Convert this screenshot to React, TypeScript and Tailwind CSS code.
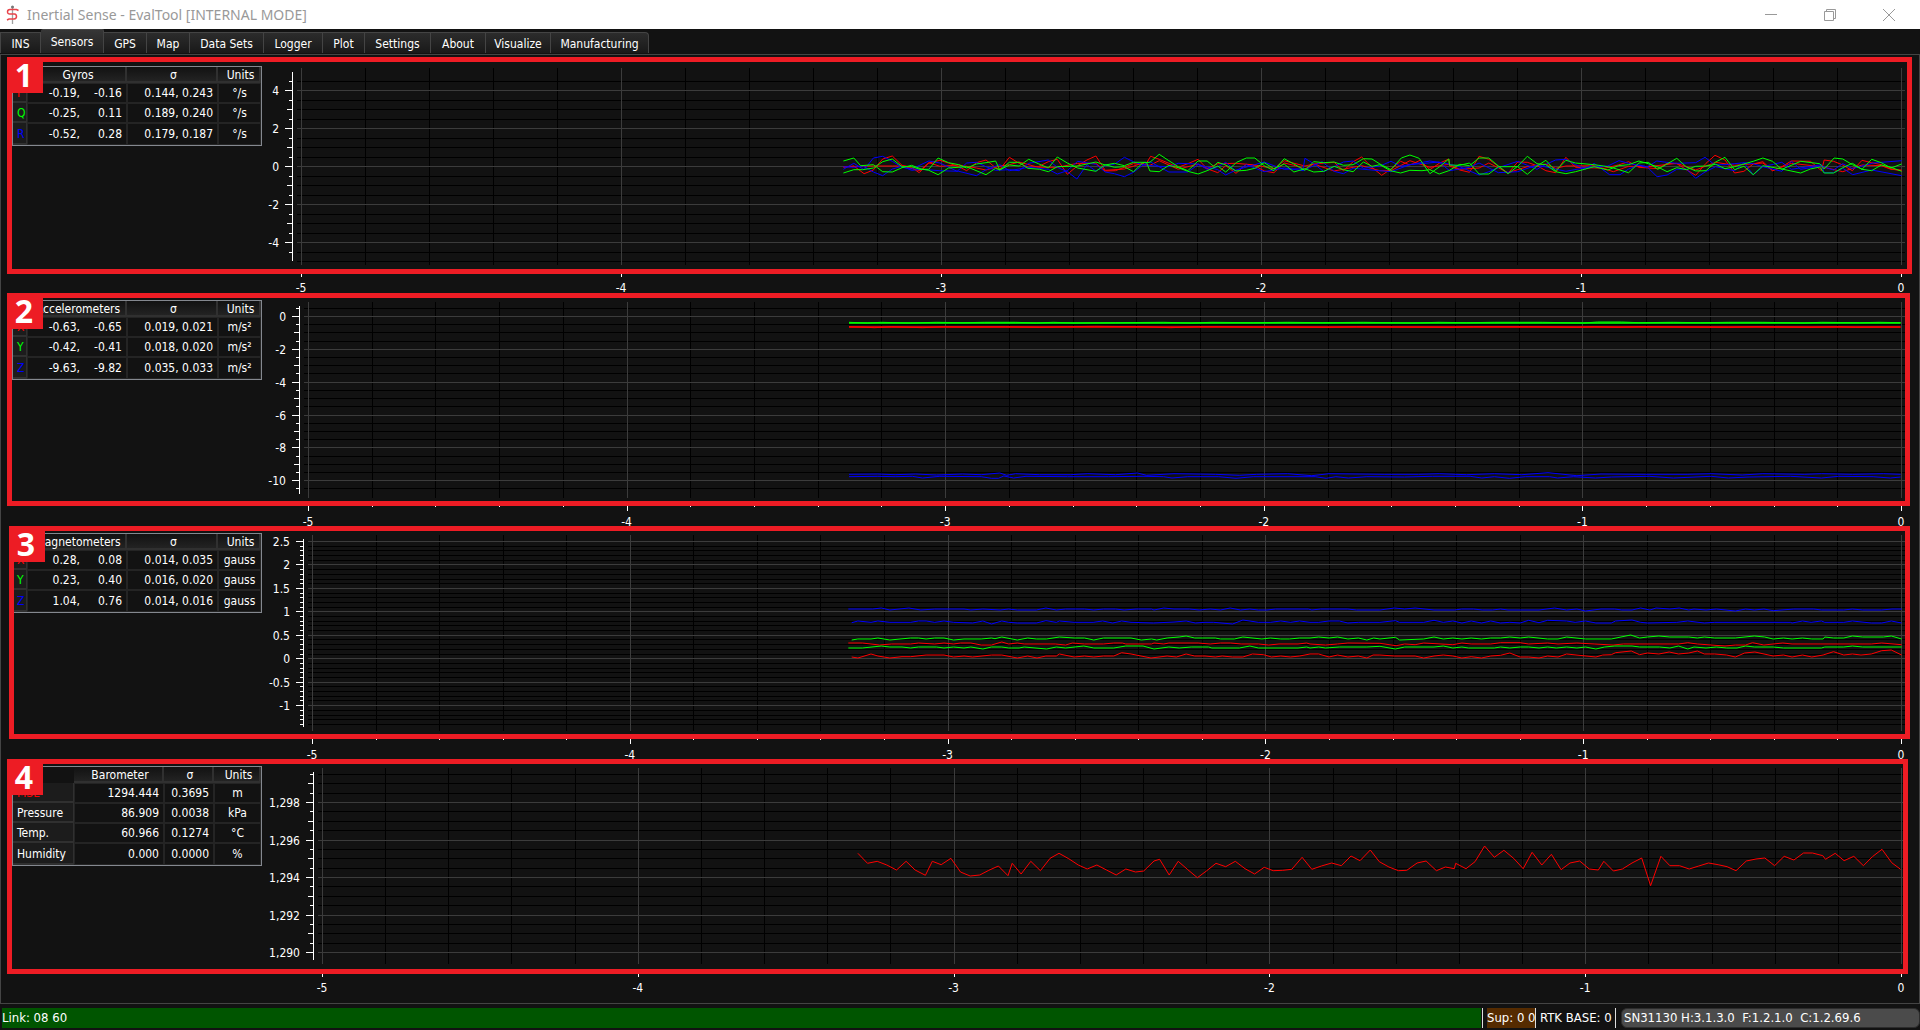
import React from 'react';

type Trace = { color: string; points: string; width?: number };

type Chart = {
  id: number;
  title: string;
  /** width of the y axis column and of the plot canvas */
  axisWidth: number;
  plotWidth: number;
  plotHeight: number;
  /** y axis line, first and last pixel */
  axisFrom: number;
  axisTo: number;
  /** value at the top of the scale: pixel of `origin`, pixels per unit */
  origin: number;
  originY: number;
  unit: number;
  step: number;
  from: number;
  to: number;
  majorEvery: number;
  mediumEvery: number;
  labels: string[];
  /** trace coordinates: divisor in x, and zero position */
  sx: number;
  left: number;
  top: number;
  traces: Trace[];
  rows: { name: string; color: string; a: string; b?: string; sigma: string; unit: string }[];
};

const RED = '#ff0000';
const GREEN = '#00ff00';
const BLUE = '#0000ff';

const gyroTraces: Trace[] = [
  { color: RED, points: '10 112 40 108 70 131 97 120 124 87 152 78 180 106 208 112 230 128 258 99 290 91 315 99 345 110 368 122 396 98 424 90 452 113 464 118 492 82 520 100 548 112 576 110 605 95 631 88 660 133 690 107 717 90 743 78 770 121 826 117 880 99 887 105 902 79 927 88 955 100 982 112 1010 101 1040 88 1066 116 1097 128 1120 107 1150 130 1180 103 1205 107 1232 123 1260 128 1290 99 1318 106 1350 117 1376 102 1435 97 1462 122 1490 95 1515 81 1545 112 1573 136 1600 117 1628 94 1655 105 1685 91 1713 119 1740 100 1768 87 1770 108 1800 120 1828 127 1856 79 1884 88 1912 109 1940 130 1968 96 1996 97 2024 107 2050 122 2078 128 2108 82 2136 112 2220 115 2260 105 2290 95 2320 112 2375 116 2402 100 2430 101 2458 119 2485 136 2515 100 2541 76 2570 90 2598 129 2625 124 2652 102 2680 95 2708 122 2735 110 2763 93 2818 94 2850 122 2858 90 2885 94 2912 105 2940 122 2968 91 2996 98 3024 104 3052 117 3083 122' },
  { color: RED, points: '10 110 97 108 152 108 180 108 232 122 258 98 290 109 345 105 396 114 424 120 464 108 492 104 520 96 576 112 631 112 690 100 743 100 770 123 800 122 852 101 900 106 927 92 982 118 1040 102 1066 116 1097 101 1150 100 1205 105 1260 116 1290 92 1350 108 1376 102 1435 123 1515 107 1568 122 1600 122 1655 92 1713 112 1768 103 1800 118 1856 114 1884 99 1940 128 1996 110 2050 102 2078 115 2108 108 2190 107 2246 125 2290 109 2347 110 2430 100 2485 120 2543 97 2598 106 2680 99 2708 122 2763 100 2850 110 2912 125 2968 105 3024 107 3052 118 3083 120' },
  { color: BLUE, points: '10 118 40 100 70 119 97 84 124 79 152 94 180 112 208 117 258 93 290 99 340 124 368 99 396 97 424 110 452 121 492 119 520 122 548 100 605 90 631 112 660 125 688 147 717 104 743 123 770 107 797 103 826 82 852 95 880 105 900 95 955 126 1010 126 1040 104 1097 119 1120 135 1150 120 1232 96 1260 107 1290 118 1345 116 1350 85 1376 101 1405 125 1462 96 1490 93 1520 115 1568 108 1600 94 1628 109 1713 93 1768 102 1800 110 1856 135 1884 125 1912 113 1968 94 2024 118 2050 103 2078 90 2108 88 2136 104 2165 117 2190 100 2235 134 2265 134 2290 117 2320 105 2345 110 2372 93 2400 97 2430 100 2485 98 2512 82 2540 104 2570 104 2625 98 2652 101 2680 110 2735 124 2763 94 2790 118 2850 108 2885 120 2912 101 2940 116 3000 99 3083 92' },
  { color: BLUE, points: '10 110 40 112 66 108 97 126 124 137 152 117 180 109 208 121 236 118 290 122 345 124 396 137 424 119 464 104 492 122 548 112 605 118 631 132 660 122 690 94 743 103 770 126 797 131 826 140 852 127 880 105 927 109 955 110 982 100 1040 102 1066 118 1097 110 1120 97 1150 123 1180 104 1232 125 1290 114 1345 122 1400 95 1435 124 1462 131 1490 115 1545 120 1600 125 1655 104 1740 96 1770 122 1828 112 1856 99 1912 128 1968 125 2024 105 2108 124 2165 113 2230 108 2262 92 2290 100 2345 112 2373 140 2402 135 2430 118 2458 117 2485 145 2512 126 2543 110 2598 122 2625 98 2652 134 2680 110 2735 97 2763 118 2850 104 2858 128 2885 128 2912 115 2941 134 2996 120 3083 137' },
  { color: GREEN, points: '10 93 40 84 60 107 97 104 124 125 152 126 180 113 208 106 236 117 258 121 285 134 315 114 368 110 424 134 452 115 464 120 492 97 520 97 545 115 580 118 605 125 631 110 690 108 743 96 770 105 797 100 826 107 852 97 890 97 900 123 927 125 955 106 982 113 1010 124 1040 132 1066 122 1097 108 1120 126 1152 97 1180 84 1205 84 1232 107 1260 122 1290 86 1318 102 1350 121 1376 95 1405 98 1435 96 1462 106 1490 104 1520 86 1545 87 1568 102 1600 119 1630 84 1655 75 1682 85 1713 131 1740 111 1768 87 1770 105 1800 106 1828 99 1856 132 1884 132 1912 110 1968 110 1996 133 2024 108 2050 91 2078 123 2108 91 2136 99 2190 104 2218 108 2246 114 2290 128 2320 99 2347 97 2375 118 2430 85 2458 111 2485 123 2515 122 2543 96 2570 82 2598 119 2625 109 2652 134 2680 107 2735 117 2790 129 2818 117 2845 111 2858 129 2885 129 2912 113 2940 100 2968 118 2996 122 3024 105 3052 112 3083 124' },
  { color: GREEN, points: '10 129 40 119 66 119 97 114 124 95 152 87 180 110 208 110 232 118 258 118 285 84 315 98 345 104 368 114 396 102 424 98 452 93 464 120 492 105 520 108 548 88 576 101 605 114 631 81 660 99 690 114 743 124 770 104 797 112 826 110 852 125 880 98 900 97 927 73 955 92 982 110 1010 122 1040 93 1066 93 1085 109 1097 97 1120 105 1150 123 1180 121 1205 115 1232 98 1260 116 1290 102 1318 126 1350 116 1376 126 1405 124 1435 109 1462 119 1490 125 1520 96 1545 109 1568 104 1598 122 1628 129 1655 121 1690 122 1713 119 1740 132 1768 122 1800 103 1828 107 1856 84 1884 84 1912 108 1940 131 1968 109 1996 79 2024 101 2050 104 2078 125 2108 131 2136 125 2190 110 2230 120 2260 107 2290 104 2320 93 2347 101 2375 111 2402 125 2430 113 2458 119 2485 109 2515 108 2543 103 2570 116 2598 110 2652 94 2680 84 2708 94 2735 118 2790 94 2845 101 2858 117 2887 84 2912 87 2940 104 2968 118 2996 88 3024 98 3052 114 3083 102' },
];

const accelTraces: Trace[] = [
  { color: '#cc0000', width: 2, points: '13 51 1540 51' },
  { color: RED, points: '13 50 30 51 50 53 75 50 120 53 150 50 180 51 240 50 290 52 330 50 370 49 440 50 480 53 520 50 550 50 600 51 710 52 750 50 890 52 920 50 1000 50 1070 52 1095 50 1130 52 1160 50 1290 52 1330 50 1410 52 1450 50 1475 52 1510 51 1540 51' },
  { color: '#00cc00', width: 2, points: '13 39 1540 39' },
  { color: GREEN, points: '13 37 40 39 60 37 100 39 140 37 180 38 210 37 255 37 285 39 310 37 340 39 400 38 470 37 510 39 540 37 600 38 650 37 700 38 760 37 830 39 870 37 910 38 950 37 1020 37 1080 39 1100 36 1135 36 1160 38 1210 37 1250 38 1290 37 1340 37 1400 39 1425 37 1480 38 1510 37 1540 38' },
  { color: BLUE, points: '13 493 55 492 80 494 110 492 140 495 178 492 205 494 232 489 242 496 255 491 290 494 335 494 360 491 400 494 432 489 445 496 485 491 545 493 580 496 605 493 650 491 685 497 710 491 790 493 840 493 870 491 910 494 950 491 990 494 1028 488 1070 497 1105 492 1170 493 1230 493 1265 491 1310 495 1340 491 1400 493 1425 491 1470 493 1515 491 1540 493' },
  { color: BLUE, points: '13 500 55 499 80 500 105 499 120 504 145 499 205 500 220 505 230 505 238 498 252 504 270 499 330 500 390 500 440 499 470 500 482 504 505 500 550 500 575 505 600 500 690 500 706 505 720 500 738 504 765 500 820 501 860 499 915 499 932 504 950 500 972 505 995 500 1030 500 1042 504 1065 500 1097 504 1120 501 1175 499 1210 504 1265 499 1290 504 1320 501 1380 499 1425 504 1450 499 1500 500 1525 504 1540 501' },
];

const magTraces: Trace[] = [
  { color: BLUE, points: '24 57 95 57 120 54 145 60 200 54 235 60 275 57 360 57 380 60 415 57 465 60 490 57 515 60 570 60 598 54 628 60 655 57 710 57 737 60 765 57 800 57 825 60 860 57 905 57 912 60 940 54 970 57 1015 57 1043 60 1075 57 1105 60 1133 54 1163 60 1190 57 1215 60 1240 60 1265 57 1360 57 1370 60 1395 57 1475 57 1500 60 1568 60 1610 54 1640 57 1670 54 1725 60 1785 60 1805 57 1840 57 1865 60 1895 60 1918 57 1940 60 2030 60 2075 54 2110 60 2140 57 2165 63 2210 57 2250 57 2270 60 2300 60 2325 54 2352 60 2370 54 2410 57 2437 54 2465 60 2480 57 2515 60 2545 57 2600 63 2630 57 2655 60 2683 57 2710 62 2770 57 2828 57 2850 60 2915 60 2940 57 2970 60 3025 60 3055 57 3083 57' },
  { color: BLUE, points: '34 98 52 93 90 97 110 93 145 97 205 97 228 93 250 93 275 97 302 93 330 97 385 99 415 93 440 102 470 93 490 97 515 99 570 99 598 92 628 97 637 93 680 97 735 97 763 93 792 99 818 93 845 97 910 99 970 96 1005 93 1032 99 1060 97 1085 97 1140 102 1170 90 1215 97 1250 97 1280 93 1308 97 1335 93 1365 97 1390 97 1420 93 1450 93 1475 99 1505 97 1568 97 1613 92 1625 97 1695 97 1725 91 1752 97 1780 93 1806 99 1833 93 1863 99 1890 93 1918 99 1945 97 1975 99 2000 91 2030 98 2055 91 2110 93 2135 97 2165 93 2195 99 2240 99 2252 93 2300 90 2325 97 2345 99 2430 97 2462 93 2510 99 2540 97 2760 97 2765 99 2795 93 2820 97 2850 93 2860 97 2915 97 2940 93 2995 99 3025 99 3053 93 3083 99' },
  { color: RED, points: '24 159 65 159 115 165 150 162 205 162 228 159 275 162 302 159 330 162 350 159 380 159 410 165 440 165 470 156 490 162 515 159 535 162 625 162 655 165 675 159 710 162 765 162 795 159 820 159 830 162 905 162 912 159 940 162 955 159 1040 159 1075 162 1105 159 1135 159 1165 162 1215 162 1245 165 1275 162 1330 162 1355 159 1365 162 1410 165 1445 162 1475 159 1568 160 1615 167 1640 162 1670 164 1695 159 1780 164 1806 159 1833 162 1890 162 1918 158 1975 158 2000 162 2055 159 2085 162 2140 159 2190 162 2245 165 2275 162 2435 162 2462 158 2490 162 2570 168 2600 165 2630 165 2650 158 2683 165 2738 159 2765 162 2995 162 3025 159 3083 164' },
  { color: RED, points: '34 201 52 204 90 192 110 198 145 204 180 200 205 200 250 195 302 195 330 201 360 198 385 201 440 195 470 195 515 204 545 198 572 204 598 198 628 198 637 192 680 201 710 198 737 201 765 198 795 198 818 188 845 192 903 204 950 198 977 201 1005 192 1030 198 1060 198 1090 201 1110 198 1140 201 1170 201 1198 192 1230 194 1253 201 1280 198 1308 201 1335 198 1365 192 1390 192 1420 201 1445 195 1475 201 1505 198 1530 204 1548 195 1568 195 1610 198 1670 198 1695 204 1725 198 1752 195 1780 198 1806 204 1833 200 1863 204 1890 198 1918 196 1945 189 1975 201 2000 201 2030 204 2055 198 2085 201 2110 192 2195 201 2215 195 2240 194 2252 188 2298 183 2322 194 2345 189 2378 192 2408 186 2435 192 2465 189 2490 183 2510 192 2540 192 2575 195 2600 201 2627 189 2657 186 2710 198 2740 195 2765 201 2795 195 2822 201 2855 195 2885 185 2915 195 2940 192 2965 195 2995 192 3025 182 3053 180 3083 195' },
  { color: GREEN, points: '34 150 52 147 90 147 110 144 145 150 205 144 228 144 250 147 275 144 302 144 330 150 360 147 410 147 440 144 450 146 470 141 515 150 545 144 570 147 600 147 637 141 680 144 710 144 737 150 765 144 845 144 875 150 905 147 920 150 950 144 985 141 1005 138 1030 144 1090 144 1105 147 1145 147 1170 141 1225 147 1250 144 1280 147 1305 147 1335 144 1365 144 1390 141 1420 144 1445 141 1475 147 1505 144 1530 150 1550 144 1568 147 1613 142 1625 150 1695 147 1725 141 1752 147 1780 144 1806 147 1833 144 1863 147 1890 144 1918 144 1945 141 1975 144 2000 141 2055 147 2085 147 2110 141 2165 147 2240 147 2296 135 2322 144 2345 141 2378 138 2410 141 2465 141 2490 144 2510 141 2540 144 2600 144 2655 138 2685 141 2710 147 2740 144 2765 147 2795 144 2822 147 2855 147 2860 141 2885 144 2915 144 2940 138 2970 141 3030 141 3053 138 3083 147' },
  { color: GREEN, points: '24 174 65 174 120 168 145 171 180 171 205 174 228 171 280 171 302 174 330 171 360 174 380 171 415 177 440 171 470 171 490 174 520 174 535 171 600 177 628 171 655 174 708 168 737 174 795 174 830 168 880 168 912 177 955 171 985 174 1020 171 1070 171 1080 174 1160 174 1190 168 1215 174 1330 174 1355 171 1365 174 1390 171 1410 174 1450 171 1530 171 1568 169 1613 177 1640 171 1725 171 1752 168 1780 174 1806 171 1825 174 1900 174 1918 171 1945 174 1975 171 2000 171 2030 174 2055 171 2080 174 2110 171 2140 174 2165 171 2195 177 2220 171 2250 168 2300 168 2322 171 2380 171 2410 174 2435 168 2462 177 2480 171 2515 174 2545 171 2575 174 2605 174 2630 168 2655 171 2710 171 2740 174 2850 174 2860 171 2915 171 2940 168 2970 171 3083 171' },
];

const baroTraces: Trace[] = [
  { color: RED, points: '26 70 40 100 54 94 68 105 82 120 96 94 109 120 124 136 134 94 147 104 161 85 175 126 189 138 203 135 216 121 230 108 244 137 250 100 263 132 277 94 291 122 305 85 318 70 332 86 346 105 359 117 373 105 387 120 401 135 415 117 429 126 441 123 456 93 464 88 478 135 491 94 505 119 519 143 532 123 546 100 560 110 574 94 588 116 602 132 616 112 629 122 643 121 656 118 671 82 685 118 699 108 714 99 728 107 742 78 755 92 770 60 783 95 797 111 811 122 823 121 838 99 851 93 866 122 879 111 892 116 894 100 909 116 922 95 936 48 950 82 964 61 978 85 992 116 1005 67 1019 105 1033 73 1047 119 1060 99 1074 93 1088 117 1101 120 1109 94 1123 123 1136 117 1150 99 1164 84 1177 167 1192 79 1205 107 1219 107 1233 117 1247 108 1261 99 1275 104 1288 110 1301 122 1316 93 1330 87 1343 84 1357 107 1371 79 1385 90 1399 69 1412 69 1427 77 1431 88 1445 70 1458 92 1472 79 1486 107 1499 80 1513 58 1527 98 1540 118' },
];

const charts: Chart[] = [
  {
    id: 1, title: 'Gyros', axisWidth: 35, plotWidth: 1608, plotHeight: 197,
    axisFrom: 4, axisTo: 193, origin: 0, originY: 98.5, unit: 19, step: 0.5, from: 4.5, to: -5,
    majorEvery: 2, mediumEvery: 1, labels: ['4', '2', '0', '-2', '-4'],
    sx: 2.904, left: 543, top: 62, traces: gyroTraces,
    rows: [
      { name: 'P', color: '#ff0000', a: '-0.19,', b: '-0.16', sigma: '0.144, 0.243', unit: '°/s' },
      { name: 'Q', color: '#00ff00', a: '-0.25,', b: '0.11', sigma: '0.189, 0.240', unit: '°/s' },
      { name: 'R', color: '#0000ff', a: '-0.52,', b: '0.28', sigma: '0.179, 0.187', unit: '°/s' },
    ],
  },
  {
    id: 2, title: 'Accelerometers', axisWidth: 42, plotWidth: 1601, plotHeight: 196,
    axisFrom: 4, axisTo: 192, origin: 0, originY: 14.5, unit: 16.42, step: 0.5, from: 0.5, to: -10.5,
    majorEvery: 2, mediumEvery: 1, labels: ['0', '-2', '-4', '-6', '-8', '-10'],
    sx: 1.452, left: 536, top: 8, traces: accelTraces,
    rows: [
      { name: 'X', color: '#ff0000', a: '-0.63,', b: '-0.65', sigma: '0.019, 0.021', unit: 'm/s²' },
      { name: 'Y', color: '#00ff00', a: '-0.42,', b: '-0.41', sigma: '0.018, 0.020', unit: 'm/s²' },
      { name: 'Z', color: '#0000ff', a: '-9.63,', b: '-9.82', sigma: '0.035, 0.033', unit: 'm/s²' },
    ],
  },
  {
    id: 3, title: 'Magnetometers', axisWidth: 46, plotWidth: 1597, plotHeight: 196,
    axisFrom: 4, axisTo: 192, origin: 2.5, originY: 6.5, unit: 46.9, step: 0.1, from: 2.5, to: -1.4,
    majorEvery: 0.5, mediumEvery: 0.5, labels: ['2.5', '2', '1.5', '1', '0.5', '0', '-0.5', '-1'],
    sx: 2.904, left: 532, top: 55, traces: magTraces,
    rows: [
      { name: 'X', color: '#ff0000', a: '0.28,', b: '0.08', sigma: '0.014, 0.035', unit: 'gauss' },
      { name: 'Y', color: '#00ff00', a: '0.23,', b: '0.40', sigma: '0.016, 0.020', unit: 'gauss' },
      { name: 'Z', color: '#0000ff', a: '1.04,', b: '0.76', sigma: '0.014, 0.016', unit: 'gauss' },
    ],
  },
  {
    id: 4, title: 'Barometer', axisWidth: 56, plotWidth: 1587, plotHeight: 196,
    axisFrom: 4, axisTo: 192, origin: 1298, originY: 34.5, unit: 18.75, step: 0.5, from: 1299.5, to: 1290,
    majorEvery: 2, mediumEvery: 1, labels: ['1,298', '1,296', '1,294', '1,292', '1,290'],
    sx: 1.452, left: 522, top: 62, traces: baroTraces,
    rows: [
      { name: 'MSL', color: '#ff0000', a: '1294.444', sigma: '0.3695', unit: 'm' },
      { name: 'Pressure', color: '#ffffff', a: '86.909', sigma: '0.0038', unit: 'kPa' },
      { name: 'Temp.', color: '#ffffff', a: '60.966', sigma: '0.1274', unit: '°C' },
      { name: 'Humidity', color: '#ffffff', a: '0.000', sigma: '0.0000', unit: '%' },
    ],
  },
];

const isMultiple = (v: number, every: number) => Math.abs(v / every - Math.round(v / every)) < 1e-6;

function yTicks(c: Chart) {
  const count = Math.round((c.from - c.to) / c.step);
  return Array.from({ length: count + 1 }, (_, i) => {
    const value = c.from - i * c.step;
    return {
      y: Math.floor(c.originY + (c.origin - value) * c.unit) + 0.5,
      major: isMultiple(value, c.majorEvery),
      medium: isMultiple(value, c.mediumEvery),
    };
  });
}

function toPolyline(c: Chart, points: string) {
  const n = points.split(' ').map(Number);
  const out: string[] = [];
  for (let i = 0; i < n.length; i += 2) {
    out.push(`${(c.left + n[i] / c.sx).toFixed(1)},${(c.top + n[i + 1] / 3).toFixed(1)}`);
  }
  return out.join(' ');
}

function YAxis({ chart }: { chart: Chart }) {
  const x = chart.axisWidth - 4;
  const ticks = yTicks(chart);
  const majors = ticks.filter((t) => t.major);
  return (
    <svg width={chart.axisWidth} height={210} className="shrink-0 overflow-visible" fill="#fff" fontSize={12}>
      <path
        d={`M${x - 0.5} ${chart.axisFrom}V${chart.axisTo} ` +
          ticks
            .filter((t) => t.y < chart.axisTo)
            .map((t) => `M${x - (t.major ? 8 : t.medium ? 6 : 4)} ${t.y}H${x}`)
            .join(' ')}
        stroke="#fff"
        shapeRendering="crispEdges"
      />
      {majors.map((t, i) => (
        <text key={i} x={x - 14} y={t.y + 4.5} textAnchor="end">
          {chart.labels[i]}
        </text>
      ))}
    </svg>
  );
}

function Plot({ chart }: { chart: Chart }) {
  const w = chart.plotWidth;
  const h = chart.plotHeight;
  const span = w - 8;
  const columns = Array.from({ length: 26 }, (_, i) => ({
    x: 4.5 + Math.round((i * span) / 25),
    major: i % 5 === 0,
  }));
  const rows = yTicks(chart);
  const grid = (major: boolean) =>
    columns.filter((c) => c.major === major).map((c) => `M${c.x} 0V${h}`).join(' ') +
    rows.filter((r) => r.major === major).map((r) => `M0 ${r.y}H${w}`).join(' ');
  return (
    <svg viewBox={`0 0 ${w} 210`} preserveAspectRatio="none" className="h-[210px] w-full" fill="none">
      <g shapeRendering="crispEdges">
        <path d={grid(false)} stroke="#000" />
        <path d={grid(true)} stroke="#3c3c3c" />
        <path d={columns.map((c) => `M${c.x} 202V${c.major ? 209 : 205}`).join(' ')} stroke="#fff" />
      </g>
      {chart.traces.map((t, i) => (
        <polyline key={i} points={toPolyline(chart, t.points)} stroke={t.color} strokeWidth={t.width ?? 1} />
      ))}
    </svg>
  );
}

function StatsTable({ chart }: { chart: Chart }) {
  const baro = chart.id === 4;
  const head = 'border-r-2 border-b-2 border-[#303030] bg-linear-to-b from-[#121212] to-[#232323] p-0 pt-0.5 pl-1 leading-3 font-normal';
  const cell = 'border border-[#242424] p-0';
  return (
    <div className="-mt-0.5 w-[250px] shrink-0 self-start border border-[#84888f]">
      <table className="w-full table-fixed border-separate border-spacing-0 leading-4">
        <colgroup>
          <col className={baro ? 'w-[61px]' : 'w-[14px]'} />
          <col className={baro ? 'w-[90px]' : 'w-[100px]'} />
          <col className={baro ? 'w-[50px]' : 'w-[91px]'} />
          <col />
        </colgroup>
        <thead>
          <tr className="h-4">
            <td className="p-0" />
            <th scope="col" className={head}>{chart.title}</th>
            <th scope="col" className={head}>σ</th>
            <th scope="col" className={head}>Units</th>
          </tr>
        </thead>
        <tbody>
          {chart.rows.map((r, i) => (
            <tr key={r.name} className={i === chart.rows.length - 1 ? 'h-[22px]' : 'h-5'}>
              <th
                scope="row"
                className="border-r border-b-2 border-[#303030] bg-[#1c1c1c] p-0 pt-0.5 pl-1 text-left font-normal"
                style={{ color: r.color }}
              >
                {r.name}
              </th>
              <td className={cell + ' pr-1 text-right'}>
                {r.a}
                {r.b && <span className="inline-block w-[42px]">{r.b}</span>}
              </td>
              <td className={cell + ' pr-1 text-right'}>{r.sigma}</td>
              <td className={cell + ' text-center'}>{r.unit}</td>
            </tr>
          ))}
        </tbody>
      </table>
    </div>
  );
}

const frames: Record<number, string> = {
  1: '-top-[11px] left-1.5 right-[7px] h-[217px]',
  2: '-top-[9px] left-1.5 right-[9px] h-[213px]',
  3: '-top-[9px] left-2 right-[9px] h-[213px]',
  4: '-top-[9px] left-1.5 right-[11px] h-[215px]',
};

function SensorPanel({ chart }: { chart: Chart }) {
  return (
    <section className="relative flex pr-[14px] pl-[11px]" aria-label={chart.title}>
      <StatsTable chart={chart} />
      <YAxis chart={chart} />
      <div className="min-w-0 flex-1">
        <Plot chart={chart} />
        <div className="mt-0.5 flex justify-between px-1 leading-4">
          {['-5', '-4', '-3', '-2', '-1', '0'].map((l) => (
            <span key={l} className="flex w-0 justify-center">{l}</span>
          ))}
        </div>
      </div>
      <div className={'pointer-events-none absolute border-5 border-[#ed1c24] ' + frames[chart.id]}>
        <span className="absolute -top-[5px] -left-[5px] flex h-9 w-9 items-center justify-center bg-[#ed1c24] pr-0.5 font-['Open_Sans',sans-serif] text-[32px] leading-9 font-bold">
          {chart.id}
        </span>
      </div>
    </section>
  );
}

const tabs: [string, string][] = [
  ['INS', 'w-[41px]'],
  ['Sensors', 'w-[63px]'],
  ['GPS', 'w-[43px]'],
  ['Map', 'w-[43px]'],
  ['Data Sets', 'w-[74px]'],
  ['Logger', 'w-[59px]'],
  ['Plot', 'w-[42px]'],
  ['Settings', 'w-[66px]'],
  ['About', 'w-[55px]'],
  ['Visualize', 'w-[65px]'],
  ['Manufacturing', 'w-[98px]'],
];

function TitleBar() {
  return (
    <header className="flex h-[29px] items-center bg-white pr-0.5 pl-1.5 text-[#999]">
      <svg width="13" height="19" viewBox="0 0 13 19" fill="none">
        <path d="M6.500 1V19" stroke="#a0a0a0" strokeWidth="1.300" />
        <circle cx="6.500" cy="2" r="1.500" fill="#777" />
        <path d="M12.500 5.500L10.500 4.500H4Q1.500 4.500 1.500 6.800T4 9H8.500Q10.500 9.300 10.500 11.500T8 14H3L1 15" stroke="#e8434a" strokeWidth="1.500" />
      </svg>
      <h1 className="ml-2 flex-1 font-['Noto_Sans','Open_Sans',sans-serif] text-[14px]">Inertial Sense - EvalTool [INTERNAL MODE]</h1>
      <button aria-label="Minimize" className="flex h-full w-[58px] items-center justify-center">
        <svg width="12" height="12" stroke="#999"><path d="M0 5.500H12" /></svg>
      </button>
      <button aria-label="Restore" className="flex h-full w-[59px] items-center justify-center">
        <svg width="12" height="12" fill="none" stroke="#999"><path d="M.5 2.500H9.500V11.500H.5ZM2.500 2.500V.5H11.500V9.500H9.500" /></svg>
      </button>
      <button aria-label="Close" className="flex h-full w-[59px] items-center justify-center">
        <svg width="12" height="12" stroke="#999"><path d="M0 0L12 12M12 0L0 12" /></svg>
      </button>
    </header>
  );
}

export default function App() {
  return (
    <div className="flex min-h-screen flex-col bg-[#121212] font-['DejaVu_Sans_Condensed','Liberation_Sans',sans-serif] text-[12px] text-white">
      <TitleBar />
      <nav role="tablist" className="flex h-6 items-end">
        {tabs.map(([name, width], i) => {
          const selected = i === 1;
          return (
            <button
              key={name}
              role="tab"
              aria-selected={selected}
              className={
                'border-t border-r border-[#444] bg-linear-to-b text-center ' +
                width +
                (selected ? ' h-6 rounded-t-xs from-[#363636] to-[#222]' : ' h-[21px] from-[#2c2c2c] to-[#191919] pt-0.5') +
                (i === 0 ? ' border-l' : '') +
                (i === tabs.length - 1 ? ' rounded-tr-sm' : '')
              }
            >
              {name}
            </button>
          );
        })}
      </nav>
      <main className="mt-px grid flex-1 grid-rows-[234px_233px_233px_233px] border border-[#444] pt-[13px]">
        {charts.map((c) => (
          <SensorPanel key={c.id} chart={c} />
        ))}
      </main>
      <footer className="mt-1 mb-0.5 flex h-5 text-[13px] leading-5">
        <div className="ml-0.5 flex-1 bg-[#005500]">Link: 08 60</div>
        <div className="mr-1 ml-px w-px bg-[#ddd]" />
        <div className="w-12 bg-[#552b00] whitespace-nowrap">Sup: 0 0</div>
        <div className="mr-1 w-px bg-[#ddd]" />
        <div className="w-[75px] whitespace-nowrap">RTK BASE: 0</div>
        <div className="mr-[5px] w-px bg-[#ddd]" />
        <div className="w-[299px] rounded-md border border-[#2c2c2c] bg-[#4b4b4b] pl-0.5 leading-[18px] whitespace-pre">SN31130 H:3.1.3.0  F:1.2.1.0  C:1.2.69.6</div>
      </footer>
    </div>
  );
}
